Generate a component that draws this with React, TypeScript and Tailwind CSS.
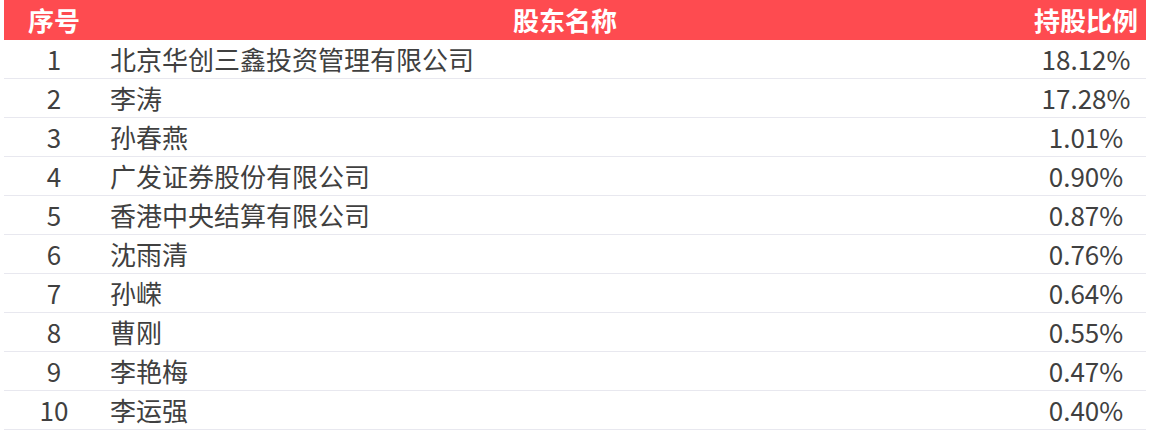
const rows = [
  ["1", "北京华创三鑫投资管理有限公司", "18.12%"],
  ["2", "李涛", "17.28%"],
  ["3", "孙春燕", "1.01%"],
  ["4", "广发证券股份有限公司", "0.90%"],
  ["5", "香港中央结算有限公司", "0.87%"],
  ["6", "沈雨清", "0.76%"],
  ["7", "孙嵘", "0.64%"],
  ["8", "曹刚", "0.55%"],
  ["9", "李艳梅", "0.47%"],
  ["10", "李运强", "0.40%"],
];

export default function App() {
  return (
    <div
      className="w-[1150px] h-[430px] bg-white px-[4px] overflow-hidden"
      style={{ fontFamily: '"Noto Sans CJK SC", "Noto Sans", sans-serif' }}
    >
      <div className="grid grid-cols-[100px_1fr_120px] h-[40px] items-center bg-[#fe4b50] text-white font-bold text-[26px] leading-none">
        <div className="text-center">序号</div>
        <div className="text-center">股东名称</div>
        <div className="text-center">持股比例</div>
      </div>
      {rows.map(([no, name, pct]) => (
        <div
          key={no}
          className="grid grid-cols-[100px_1fr_120px] h-[39px] items-center border-b border-[#e8e8ef] text-[#404040] text-[26px] leading-none"
        >
          <div className="text-center">{no}</div>
          <div className="pl-[6px]">{name}</div>
          <div className="text-center">{pct}</div>
        </div>
      ))}
    </div>
  );
}
